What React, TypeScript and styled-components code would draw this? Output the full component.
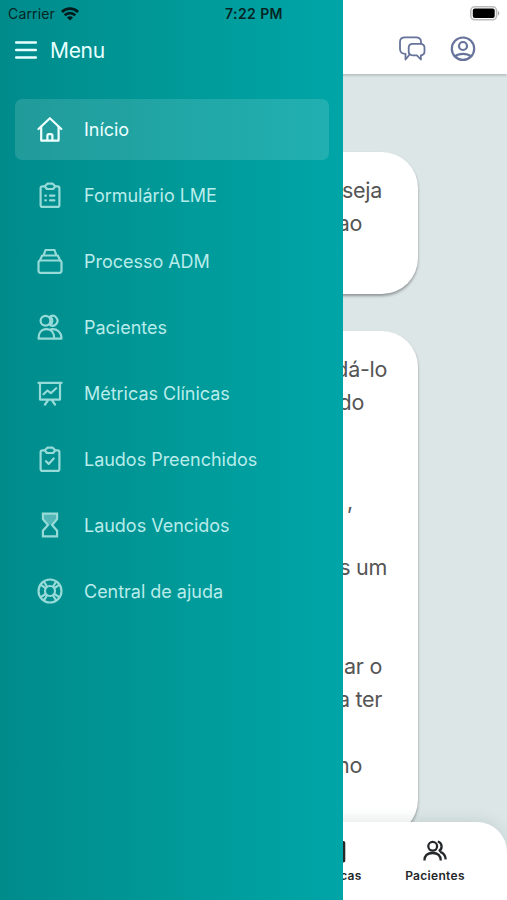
import React from 'react';
import styled, { createGlobalStyle, css } from 'styled-components';

const GlobalStyle = createGlobalStyle`
  *, *::before, *::after { box-sizing: border-box; }
  body { margin: 0; overflow: hidden; font-family: Inter, 'Liberation Sans', sans-serif; }
`;

const Screen = styled.div`
  position: relative;
  display: flex;
  flex-direction: column;
  width: 507px;
  height: 900px;
  overflow: hidden;
  background: #dde6e7;
`;

const TopBar = styled.header`
  display: flex;
  flex: none;
  justify-content: flex-end;
  align-items: flex-end;
  gap: 24px;
  height: 74px;
  padding: 0 31px 12px 0;
  background: #fff;
  box-shadow: 0 1px 3px rgba(0, 0, 0, 0.25);
  color: #66739a;
`;

const Feed = styled.main`
  display: flex;
  flex: 1;
  flex-direction: column;
  gap: 37px;
  min-height: 0;
  padding-top: 78px;
  overflow: hidden;
`;

const Bubble = styled.article`
  flex: none;
  width: 398px;
  margin-left: 20px;
  padding: 22px 0 21px;
  border-radius: 36px;
  background: #fff;
  box-shadow: 0 2px 3px rgba(0, 0, 0, 0.36);
`;

const Line = styled.p<{ $end: number }>`
  height: 33px;
  margin: 0;
  padding-right: ${({ $end }) => $end}px;
  color: #555;
  font-size: 21.5px;
  line-height: 33px;
  letter-spacing: -0.3px;
  text-align: right;
`;

const TabBar = styled.nav`
  display: flex;
  flex: none;
  justify-content: flex-end;
  gap: 14px;
  height: 78px;
  padding: 16px 29px 0 0;
  border-radius: 30px 30px 0 0;
  background: #fff;
  box-shadow: 0 -2px 14px rgba(70, 110, 100, 0.16);
  z-index: 1;
`;

const Tab = styled.div`
  display: flex;
  flex-direction: column;
  align-items: center;
  gap: 4px;
  width: 86px;
  color: #25282a;
  font-size: 12px;
  font-weight: 600;
  line-height: 16px;
  letter-spacing: 0.3px;
`;

const Drawer = styled.aside`
  position: absolute;
  inset: 0 auto 0 0;
  z-index: 2;
  width: 343px;
  padding: 34px 14px 0 15px;
  background: linear-gradient(90deg, #008b8b 0%, #009998 50%, #00a5a7 100%);
`;

const DrawerHead = styled.div`
  display: flex;
  align-items: center;
  gap: 13px;
  height: 34px;
  margin-bottom: 31px;
  color: #e8ffff;
  font-size: 21px;
  line-height: 34px;
  letter-spacing: -0.3px;
`;

const Menu = styled.ul`
  display: flex;
  flex-direction: column;
  gap: 5px;
  margin: 0;
  padding: 0;
  list-style: none;
`;

const MenuItem = styled.li<{ $active?: boolean }>`
  display: flex;
  align-items: center;
  gap: 21px;
  height: 61px;
  padding: 0 0 1px 22px;
  border-radius: 7px;
  color: #b9ecea;
  font-size: 18px;
  font-weight: 430;
  letter-spacing: -0.02px;
  white-space: nowrap;
  ${({ $active }) =>
    $active &&
    css`
      background: rgba(255, 255, 255, 0.13);
      color: #edffff;
    `}
`;

const Glyph = styled.svg<{ $soft?: boolean; $weight?: number }>`
  flex: none;
  fill: none;
  stroke: currentColor;
  stroke-width: ${({ $weight }) => $weight ?? 2.2};
  stroke-linecap: round;
  stroke-linejoin: round;
  opacity: ${({ $soft }) => ($soft ? 0.82 : 1)};
`;

const StatusBar = styled.div`
  position: absolute;
  inset: 0 0 auto 0;
  z-index: 3;
  display: grid;
  grid-template-columns: 1fr auto 1fr;
  align-items: center;
  height: 27px;
  padding: 0 7px 0 8px;
  color: #062524;
  font-size: 14px;
`;

const Carrier = styled.span`
  display: flex;
  align-items: center;
  gap: 6px;
  letter-spacing: 0.15px;
`;

const Clock = styled.span`
  font-size: 14px;
  font-weight: 600;
  letter-spacing: 0.4px;
`;

const Battery = styled.svg`
  justify-self: end;
`;

const clipboard = (
  <>
    <path d="M8 4.300H5.600a2 2 0 0 0-2 2v16.600a2 2 0 0 0 2 2h14.800a2 2 0 0 0 2-2V6.300a2 2 0 0 0-2-2H18" />
    <path d="M10.300 1.700h5.400l2.500 2.500-2 2.800H9.800l-2-2.800z" />
  </>
);

const items = [
  {
    label: 'Início',
    active: true,
    icon: (
      <>
        <path d="M1.500 13 12.900 2.200 24.300 13" />
        <path d="M4.200 10.800v13.800h17.400V10.800M10.400 24.300v-4.700a1.500 1.500 0 0 1 1.500-1.500h2a1.500 1.500 0 0 1 1.500 1.500v4.700" />
      </>
    ),
  },
  {
    label: 'Formulário LME',
    icon: (
      <>
        {clipboard}
        <path d="M8.300 13.700h.6M13 13.700h4.400M8.300 18.300h.6M13 18.300h4.400" />
      </>
    ),
  },
  {
    label: 'Processo ADM',
    icon: (
      <>
        <rect x="1.500" y="12.500" width="23" height="12.300" rx="2" />
        <path d="M3 12.300 5.200 7.500h15.600l2.200 4.800M6.600 7.300 8.500 2h9l1.900 5.300" />
      </>
    ),
  },
  {
    label: 'Pacientes',
    icon: (
      <>
        <circle cx="8.500" cy="6.800" r="4.900" />
        <path d="M13 2.600a4.900 4.900 0 1 1 0 8.400M13 2.600a4.900 4.900 0 0 1 0 8.400" />
        <path d="M1.500 24.600c0-5.500 3-9.500 7.900-9.500s7.900 4 7.900 9.500zM14.200 15.200c5.800-.8 10.300 3.200 10.300 9.400h-7" />
      </>
    ),
  },
  {
    label: 'Métricas Clínicas',
    icon: (
      <>
        <path d="M1.400 2.800h23.200M3 3v16.600h20V3M11.200 20 8 24.500M14.800 20l3.200 4.500M6.500 14.200l4-3.700 3.300 2.700 5.400-5" />
      </>
    ),
  },
  {
    label: 'Laudos Preenchidos',
    icon: (
      <>
        {clipboard}
        <path d="m9 15.200 2.700 2.700 5-5.400" />
      </>
    ),
  },
  {
    label: 'Laudos Vencidos',
    icon: (
      <>
        <path d="M6 2h14v6l-5 4.500h-4L6 8z" fill="currentColor" fillOpacity="0.550" stroke="none" />
        <path d="M5.900 1.600h14.200v5.600L15 13l5.100 5.700v5.700H5.900v-5.700L11 13 5.900 7.200z" strokeLinejoin="miter" />
      </>
    ),
  },
  {
    label: 'Central de ajuda',
    icon: (
      <>
        <circle cx="13" cy="13" r="11.500" />
        <circle cx="13" cy="13" r="5" />
        <path d="M4.200 7.200 8.500 10M7.200 4.200 10 8.500M21.800 7.200 17.500 10M18.800 4.200 16 8.500M4.200 18.800 8.500 16M7.200 21.800 10 17.500M21.800 18.800 17.500 16M18.800 21.800 16 17.500" />
      </>
    ),
  },
];

type TextLine = [text: string, end: number];

const bubbles: TextLine[][] = [
  [['seja', 36], ['ao', 56], ['', 0]],
  [
    ['dá-lo', 31],
    ['do', 54],
    ['', 0],
    ['', 0],
    [',', 65],
    ['', 0],
    ['s um', 31],
    ['', 0],
    ['', 0],
    ['ar o', 36],
    ['a ter', 36],
    ['', 0],
    ['no', 56],
    ['', 0],
  ],
];

export default function App() {
  return (
    <>
      <GlobalStyle />
      <Screen>
        <TopBar>
          <Glyph width="28" height="26" viewBox="0 0 28 26" $weight={1.8}>
            <path d="M7.500 17.800c-3.800 0-5.500-1.400-5.500-5V6c0-3.400 1.600-4.600 5-4.600H18c3.400 0 5 1.200 5 4.600v1.300M7.500 17.800v5.700l3.500-4.300" />
            <path d="M14.700 7.800h7.600c3 0 4.200 1 4.200 3.800v4c0 2.600-1 3.600-3.600 3.700v4.200l-4-4.200h-4.200c-2.800 0-4-1-4-3.700v-4c0-2.800 1.200-3.800 4-3.800z" />
          </Glyph>
          <Glyph width="26" height="26" viewBox="0 0 26 26">
            <circle cx="13" cy="12.700" r="11.200" />
            <circle cx="13" cy="10" r="4" />
            <path d="M5.300 20.300c3.500-3.300 11.900-3.300 15.400 0" />
          </Glyph>
        </TopBar>
        <Feed>
          {bubbles.map((lines, b) => (
            <Bubble key={b}>
              {lines.map(([text, end], i) => (
                <Line key={i} $end={end}>
                  {text}
                </Line>
              ))}
            </Bubble>
          ))}
        </Feed>
        <TabBar>
          <Tab>
            <Glyph width="26" height="26" viewBox="0 0 26 26" $weight={2.6}>
              <rect x="3" y="4.300" width="19" height="19" rx=".5" />
            </Glyph>
            Métricas
          </Tab>
          <Tab>
            <Glyph width="26" height="26" viewBox="0 0 26 26" $weight={2.3}>
              <circle cx="10.700" cy="8.300" r="4.400" />
              <path d="M2.400 22.600c.1-5.100 3.300-7.600 8.200-7.600s8.100 2.500 8.200 7.600M15.800 3.500c4.600 1.300 5.100 7.500 1 9.700M18.200 13.900c3.500 1.200 5.300 3.700 5.500 7.500" strokeLinecap="butt" />
            </Glyph>
            Pacientes
          </Tab>
        </TabBar>
        <Drawer>
          <DrawerHead>
            <svg width="22" height="20" viewBox="0 0 22 20" stroke="currentColor" strokeWidth="2.300" strokeLinecap="round">
              <path d="M1.100 1.500h19.800M1.100 9h19.800M1.100 16.500h19.800" />
            </svg>
            Menu
          </DrawerHead>
          <Menu>
            {items.map((item) => (
              <MenuItem key={item.label} $active={item.active}>
                <Glyph width="26" height="26" viewBox="0 0 26 26" $soft={!item.active}>
                  {item.icon}
                </Glyph>
                {item.label}
              </MenuItem>
            ))}
          </Menu>
        </Drawer>
        <StatusBar>
          <Carrier>
            Carrier
            <svg width="18" height="14" viewBox="0 0 18 14" fill="none" stroke="#001c1c" strokeWidth="2.700">
              <path d="M.9 4.900C5.400.6 12.600.6 17.100 4.900M3.700 8.200c3-2.900 7.600-2.900 10.600 0" />
              <path d="M5.900 10.500c1.800-1.700 4.400-1.700 6.200 0L9 13.600z" fill="#001c1c" stroke="none" />
            </svg>
          </Carrier>
          <Clock>7:22 PM</Clock>
          <Battery width="30" height="15" viewBox="0 0 30 15">
            <rect x=".8" y=".8" width="25.800" height="13" rx="4" fill="#fff" stroke="#bbb" strokeWidth="1.600" />
            <rect x="2.800" y="2.600" width="21.900" height="9.400" rx="2" />
            <path d="M28 5v4.600c1.800-.7 1.800-3.900 0-4.600z" fill="#aaa" />
          </Battery>
        </StatusBar>
      </Screen>
    </>
  );
}
